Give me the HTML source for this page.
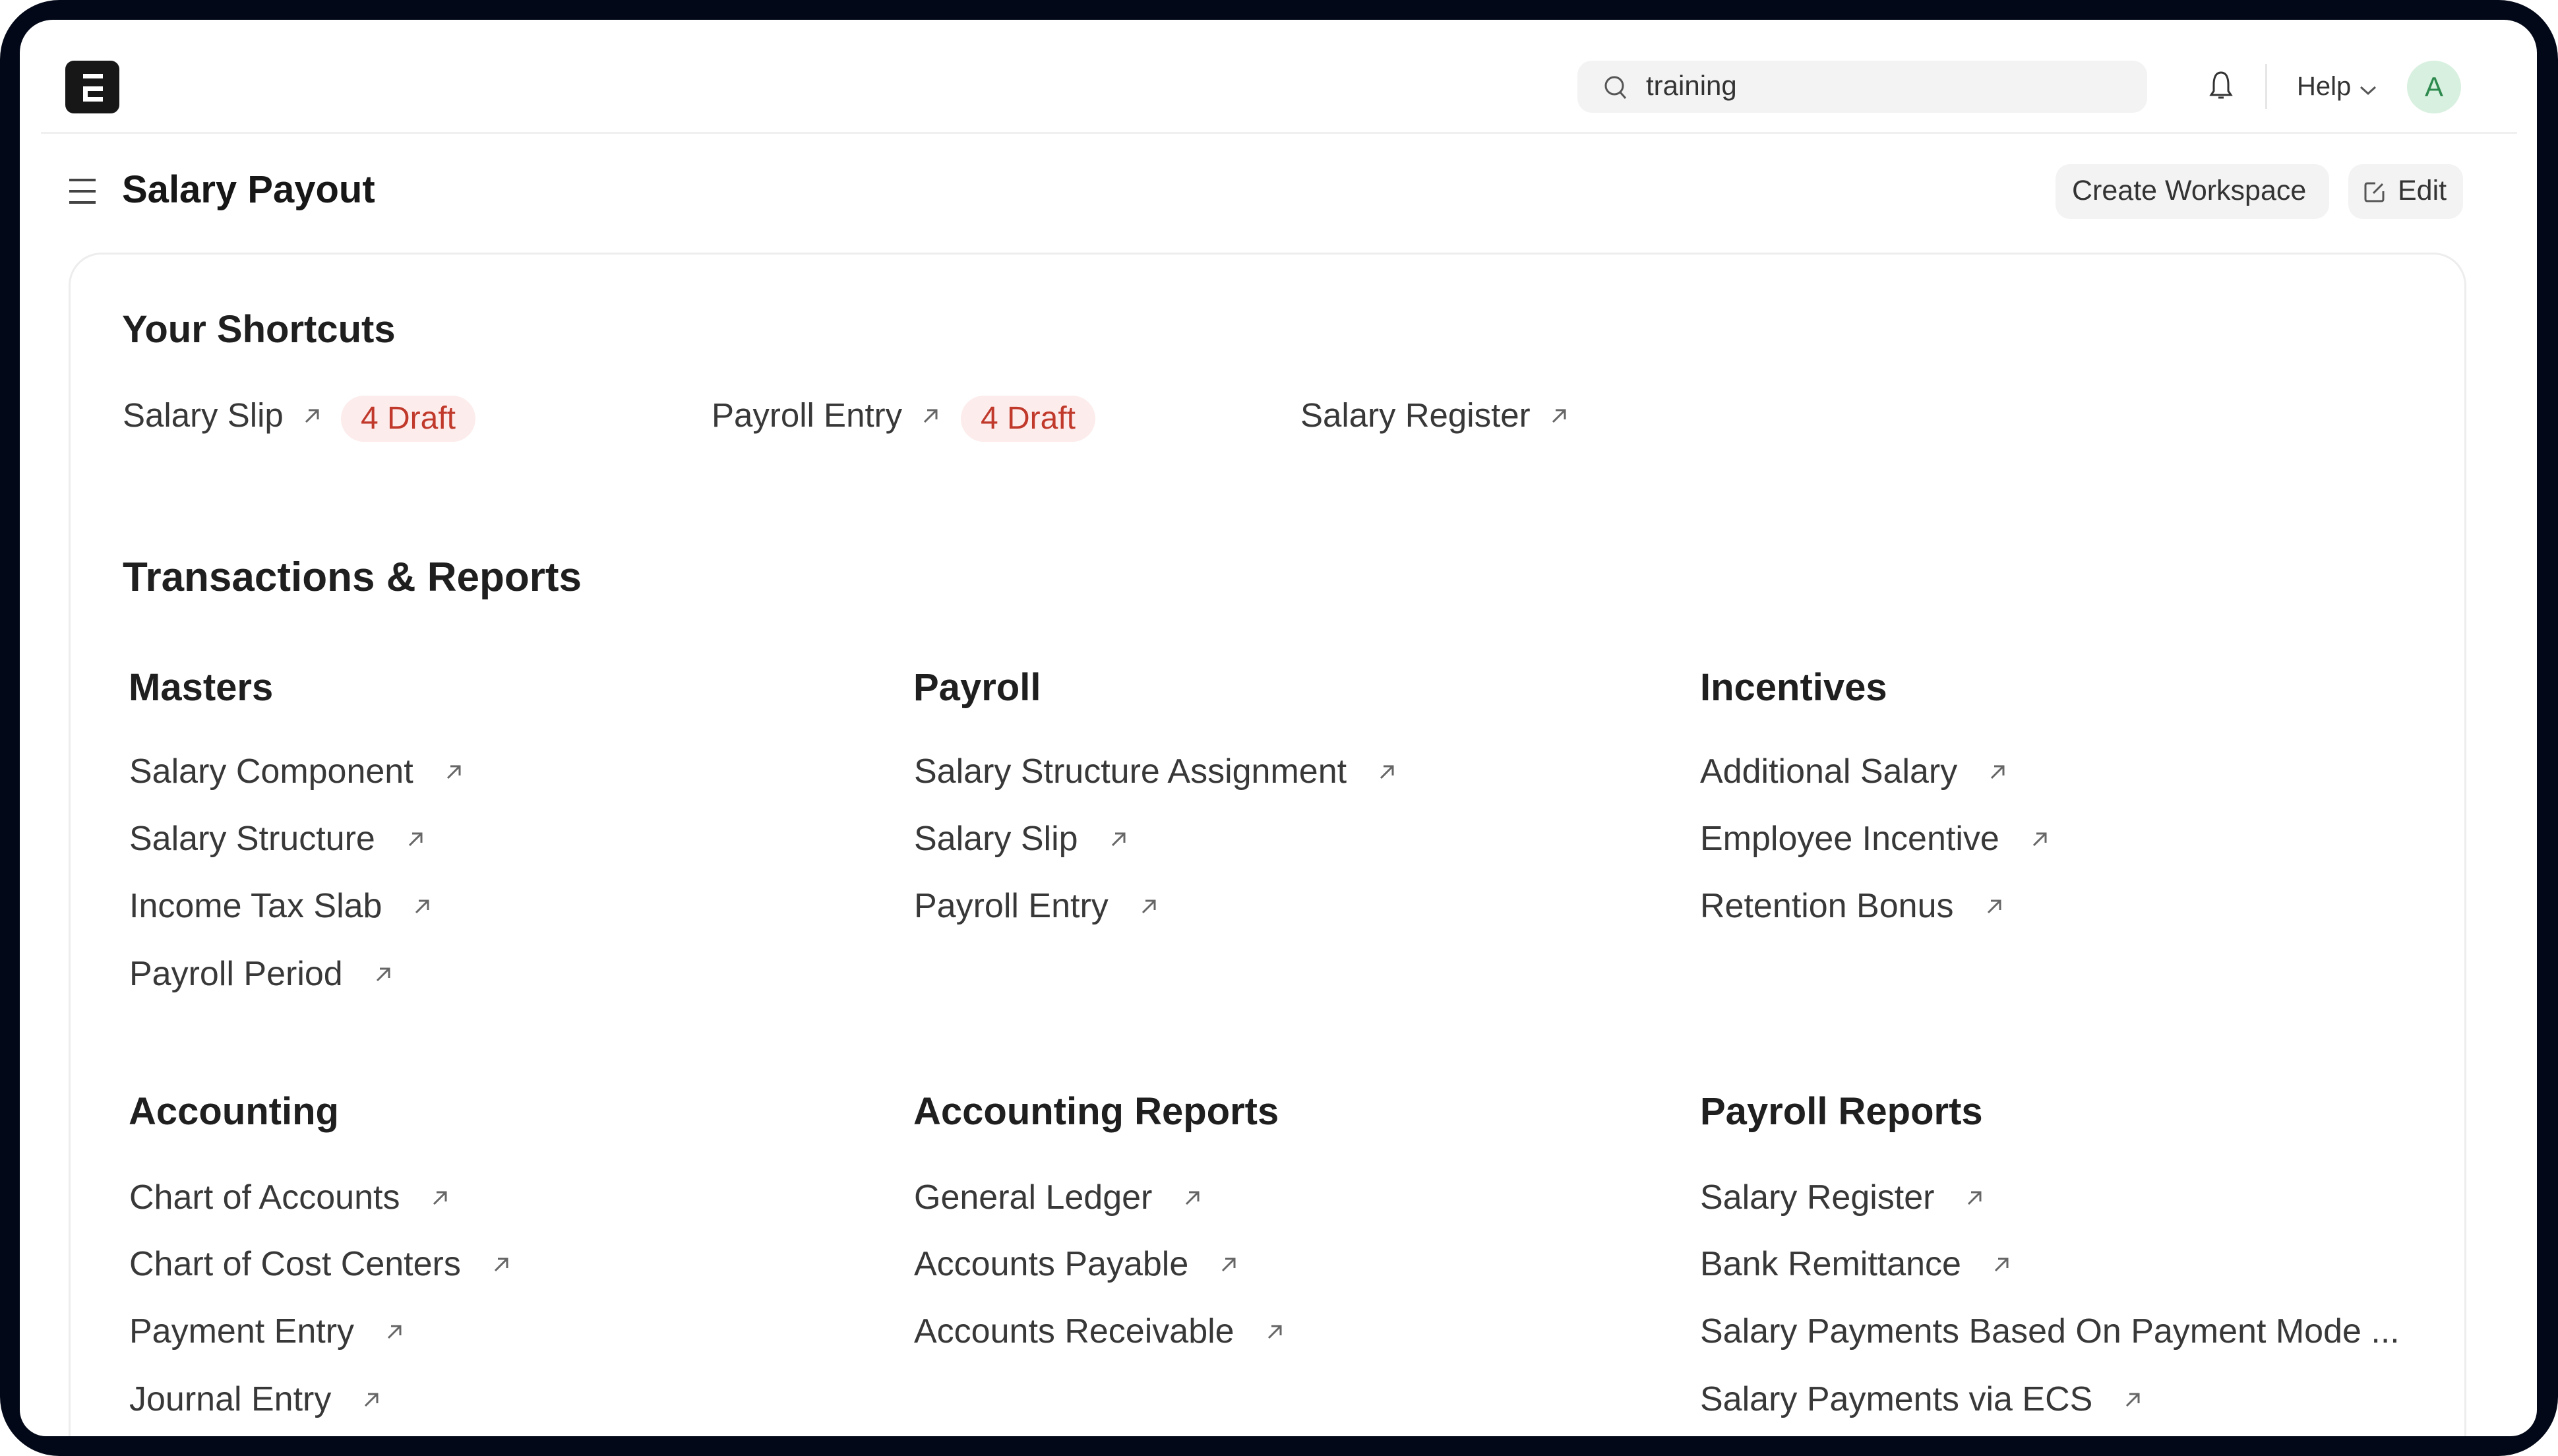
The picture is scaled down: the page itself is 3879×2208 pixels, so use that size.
<!DOCTYPE html>
<html><head><meta charset="utf-8">
<style>
*{margin:0;padding:0;box-sizing:border-box}
html,body{width:3879px;height:2208px;background:#fff;overflow:hidden;font-family:"Liberation Sans",Arial,sans-serif}
#frame{position:absolute;left:0;top:0;width:3879px;height:2208px;background:#020817;border-radius:90px}
#inner{position:absolute;left:30px;top:30px;width:3817px;height:2148px;background:#fff;border-radius:50px 50px 40px 40px}
.a{position:absolute;white-space:nowrap;line-height:1}
.lk{font-size:52px;color:#383838}
.h2{font-size:58px;font-weight:bold;color:#1f1f1f}
.ar{display:inline-block;width:26px;height:26px;margin-left:48px;vertical-align:0.05em}
.pill{position:absolute;height:70px;border-radius:35px;background:#fdecec;color:#c0392b;font-size:48px;line-height:70px;text-align:center}
.btn{position:absolute;background:#f3f3f3;border-radius:22px}
</style></head><body>
<div id="frame"></div>
<div id="inner"></div>
<svg width="0" height="0" style="position:absolute"><defs><symbol id="arr" viewBox="0 0 26 26"><path d="M4 22 L22 4 M8 4 H22 V18" fill="none" stroke="#666" stroke-width="3"/></symbol></defs></svg>

<div style="position:absolute;left:99px;top:92px;width:82px;height:80px;background:#171717;border-radius:13px"></div>
<div style="position:absolute;left:126px;top:112px;width:30px;height:7px;background:#fff"></div>
<div style="position:absolute;left:126px;top:131px;width:30px;height:23px;border:7px solid #fff;border-right:none"></div>
<div style="position:absolute;left:62px;top:200px;width:3755px;height:3px;background:#f0f0f0"></div>

<div style="position:absolute;left:2392px;top:92px;width:864px;height:79px;background:#f3f3f3;border-radius:22px"></div>
<svg style="position:absolute;left:2431px;top:113px" width="38" height="40" viewBox="0 0 38 40"><circle cx="17" cy="17" r="13" fill="none" stroke="#555" stroke-width="3"/><path d="M26 27 L34 36" stroke="#555" stroke-width="3"/></svg>
<div class="a" style="left:2496px;top:109px;font-size:42px;color:#333">training</div>
<svg style="position:absolute;left:3348px;top:106px" width="40" height="50" viewBox="0 0 40 50"><path d="M20 4 C11 4 9 14 9 22 V32 L5 38 H35 L31 32 V22 C31 14 29 4 20 4 Z" fill="none" stroke="#333" stroke-width="3"/><path d="M16 42 H24" stroke="#333" stroke-width="3"/></svg>
<div style="position:absolute;left:3435px;top:97px;width:3px;height:68px;background:#e6e6e6"></div>
<div class="a" style="left:3483px;top:111px;font-size:40px;color:#333">Help</div>
<svg style="position:absolute;left:3577px;top:128px" width="28" height="18" viewBox="0 0 28 18"><path d="M3 4 L14 14 L25 4" fill="none" stroke="#555" stroke-width="3"/></svg>
<div style="position:absolute;left:3650px;top:92px;width:82px;height:80px;border-radius:50%;background:#d8f0df;color:#2d8a4e;font-size:42px;line-height:80px;text-align:center">A</div>

<svg style="position:absolute;left:105px;top:270px" width="40" height="40" viewBox="0 0 40 40"><path d="M0 3 H40 M0 20 H40 M0 37 H40" stroke="#444" stroke-width="4"/></svg>
<div class="a" style="left:185px;top:259px;font-size:58px;font-weight:bold;color:#171717">Salary Payout</div>
<div class="btn" style="left:3117px;top:249px;width:415px;height:83px"></div>
<div class="a" style="left:3142px;top:268px;font-size:43px;color:#333">Create Workspace</div>
<div class="btn" style="left:3561px;top:249px;width:174px;height:83px"></div>
<svg style="position:absolute;left:3584px;top:274px" width="34" height="34" viewBox="0 0 34 34"><path d="M18 4 H6 Q3 4 3 7 V28 Q3 31 6 31 H27 Q30 31 30 28 V16" fill="none" stroke="#555" stroke-width="3"/><path d="M15 19 L29 5" stroke="#555" stroke-width="3"/></svg>
<div class="a" style="left:3636px;top:268px;font-size:43px;color:#333">Edit</div>

<div style="position:absolute;left:104px;top:383px;width:3636px;height:1795px;border:3px solid #ededed;border-bottom:none;border-radius:50px 50px 0 0"></div>

<div class="a h2" style="left:185px;top:471px">Your Shortcuts</div>
<div class="a" style="left:186px;top:604px;font-size:51px;color:#383838">Salary Slip<svg class="ar" style="margin-left:30px"><use href="#arr"/></svg></div>
<div class="pill" style="left:517px;top:600px;width:204px">4 Draft</div>
<div class="a" style="left:1079px;top:604px;font-size:51px;color:#383838">Payroll Entry<svg class="ar" style="margin-left:30px"><use href="#arr"/></svg></div>
<div class="pill" style="left:1457px;top:600px;width:204px">4 Draft</div>
<div class="a" style="left:1972px;top:604px;font-size:51px;color:#383838">Salary Register<svg class="ar" style="margin-left:30px"><use href="#arr"/></svg></div>

<div class="a" style="left:186px;top:845px;font-size:62px;font-weight:bold;color:#1f1f1f">Transactions &amp; Reports</div>

<div class="a h2" style="left:195px;top:1014px">Masters</div>
<div class="a h2" style="left:1385px;top:1014px">Payroll</div>
<div class="a h2" style="left:2578px;top:1014px">Incentives</div>

<div class="a lk" style="left:196px;top:1144px">Salary Component<svg class="ar"><use href="#arr"/></svg></div>
<div class="a lk" style="left:196px;top:1246px">Salary Structure<svg class="ar"><use href="#arr"/></svg></div>
<div class="a lk" style="left:196px;top:1348px">Income Tax Slab<svg class="ar"><use href="#arr"/></svg></div>
<div class="a lk" style="left:196px;top:1451px">Payroll Period<svg class="ar"><use href="#arr"/></svg></div>

<div class="a lk" style="left:1386px;top:1144px">Salary Structure Assignment<svg class="ar"><use href="#arr"/></svg></div>
<div class="a lk" style="left:1386px;top:1246px">Salary Slip<svg class="ar"><use href="#arr"/></svg></div>
<div class="a lk" style="left:1386px;top:1348px">Payroll Entry<svg class="ar"><use href="#arr"/></svg></div>

<div class="a lk" style="left:2578px;top:1144px">Additional Salary<svg class="ar"><use href="#arr"/></svg></div>
<div class="a lk" style="left:2578px;top:1246px">Employee Incentive<svg class="ar"><use href="#arr"/></svg></div>
<div class="a lk" style="left:2578px;top:1348px">Retention Bonus<svg class="ar"><use href="#arr"/></svg></div>

<div class="a h2" style="left:195px;top:1657px">Accounting</div>
<div class="a h2" style="left:1385px;top:1657px">Accounting Reports</div>
<div class="a h2" style="left:2578px;top:1657px">Payroll Reports</div>

<div class="a lk" style="left:196px;top:1790px">Chart of Accounts<svg class="ar"><use href="#arr"/></svg></div>
<div class="a lk" style="left:196px;top:1891px">Chart of Cost Centers<svg class="ar"><use href="#arr"/></svg></div>
<div class="a lk" style="left:196px;top:1993px">Payment Entry<svg class="ar"><use href="#arr"/></svg></div>
<div class="a lk" style="left:196px;top:2096px">Journal Entry<svg class="ar"><use href="#arr"/></svg></div>

<div class="a lk" style="left:1386px;top:1790px">General Ledger<svg class="ar"><use href="#arr"/></svg></div>
<div class="a lk" style="left:1386px;top:1891px">Accounts Payable<svg class="ar"><use href="#arr"/></svg></div>
<div class="a lk" style="left:1386px;top:1993px">Accounts Receivable<svg class="ar"><use href="#arr"/></svg></div>

<div class="a lk" style="left:2578px;top:1790px">Salary Register<svg class="ar"><use href="#arr"/></svg></div>
<div class="a lk" style="left:2578px;top:1891px">Bank Remittance<svg class="ar"><use href="#arr"/></svg></div>
<div class="a lk" style="left:2578px;top:1993px">Salary Payments Based On Payment Mode ...</div>
<div class="a lk" style="left:2578px;top:2096px">Salary Payments via ECS<svg class="ar"><use href="#arr"/></svg></div>
</body></html>
